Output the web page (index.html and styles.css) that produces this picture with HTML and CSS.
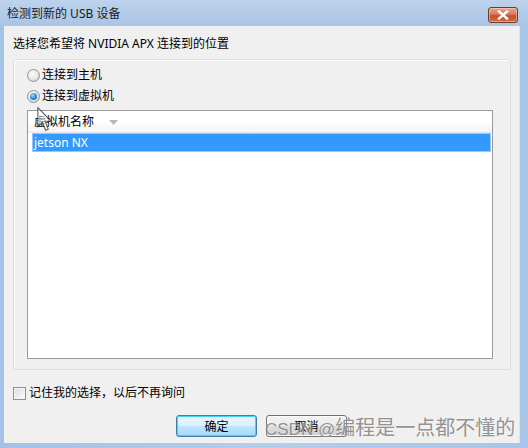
FILE: index.html
```html
<!DOCTYPE html>
<html lang="zh">
<head>
<meta charset="utf-8">
<link rel="stylesheet" href="styles.css">
</head>
<body>
<div class="window">
  <div class="titlebar">
    <span class="title">检测到新的 USB 设备</span>
    <span class="close">
      <svg width="14" height="10" viewBox="0 0 14 10"><path d="M3 1.5 L11 8.5 M11 1.5 L3 8.5" stroke="#fff" stroke-width="2.4" stroke-linecap="square"/></svg>
    </span>
  </div>
  <div class="client">
    <p class="prompt">选择您希望将 NVIDIA APX 连接到的位置</p>
    <div class="group">
      <label class="radio"><span class="dot"></span>连接到主机</label>
      <label class="radio"><span class="dot on"></span>连接到虚拟机</label>
      <div class="list">
        <div class="list-header">
          <span>虚拟机名称</span>
          <svg class="sort" width="9" height="5" viewBox="0 0 9 5"><path d="M0 0 L9 0 L4.5 5 Z" fill="#b5b9c0"/></svg>
        </div>
        <div class="rows">
          <div class="row selected">jetson NX</div>
        </div>
      </div>
    </div>
    <label class="check"><span class="box"></span>记住我的选择，以后不再询问</label>
    <div class="buttons">
      <span class="btn default">确定</span>
      <span class="btn">取消</span>
    </div>
    <div class="watermark"><span class="wm-latin">CSDN @</span>编程是一点都不懂的</div>
  </div>
  <svg class="cursor" width="16" height="25" viewBox="0 0 13 21"><path d="M0.5 0.5 L0.5 16.5 L4.3 12.8 L7 19.5 L9.2 18.6 L6.6 12 L11.8 12 Z" fill="rgba(255,255,255,0.55)" stroke="rgba(40,40,40,0.75)" stroke-width="0.9"/></svg>
</div>
</body>
</html>
```
FILE: styles.css
```css
* { box-sizing: border-box; }
html, body { margin: 0; padding: 0; }
body {
  width: 528px;
  height: 448px;
  overflow: hidden;
  font-family: "Noto Sans", "Noto Sans CJK SC", sans-serif;
  font-size: 12px;
  color: #000;
}
.window {
  position: relative;
  width: 528px;
  height: 448px;
  background: linear-gradient(to right, #a4c2e6 0%, #b4cdea 50%, #a9c5e7 100%);
  padding: 0 8px 5px 4px;
  display: flex;
  flex-direction: column;
}
.titlebar {
  height: 26px;
  display: flex;
  align-items: center;
  justify-content: space-between;
  background: linear-gradient(#bdd3ec, #a9c4e5);
  margin: 0 -8px 0 -4px;
  padding-right: 10px;
  padding-left: 7px;
}
.title {
  font-size: 12px;
  line-height: 16px;
  color: #1b1b1b;
  margin-top: 1px;
}
.close {
  width: 30px;
  height: 16px;
  border: 1px solid #6b3a2b;
  border-radius: 3px;
  background: linear-gradient(#e9a68c 0%, #d8795a 45%, #c2512f 55%, #d36b45 100%);
  display: flex;
  align-items: center;
  justify-content: center;
  box-shadow: inset 0 0 0 1px rgba(255,220,200,0.5);
  margin-top: 3px;
}
.client {
  position: relative;
  flex: 1;
  background: #f0f0f0;
  padding: 10px 0 0 9px;
  border-right: 1px solid #dbe4ee;
}
.prompt {
  margin: 0;
  font-size: 12px;
  line-height: 16px;
}
.group {
  margin-top: 7px;
  width: 498px;
  height: 311px;
  border: 1px solid #d5dfe5;
  border-radius: 3px;
  box-shadow: inset 1px 1px 0 #fff;
  padding: 7px 0 0 13px;
}
.radio, .check {
  display: flex;
  align-items: center;
  height: 16px;
  line-height: 16px;
  font-size: 12px;
}
.radio + .radio { margin-top: 5px; }
.dot {
  width: 13px;
  height: 13px;
  border-radius: 50%;
  border: 1px solid #8e8f8f;
  background: radial-gradient(circle at 40% 35%, #fafafa 0%, #e6e6e6 55%, #c9c9c9 100%);
  margin-right: 2px;
  position: relative;
}
.dot.on::after {
  content: "";
  position: absolute;
  left: 2px;
  top: 2px;
  width: 7px;
  height: 7px;
  border-radius: 50%;
  background: radial-gradient(circle at 40% 35%, #9fdcff 0%, #2c8fd8 50%, #0b4f8f 100%);
}
.list {
  margin-top: 6px;
  width: 466px;
  height: 249px;
  border: 1px solid #9a9a9a;
  background: #fff;
}
.list-header {
  height: 22px;
  display: flex;
  align-items: center;
  padding-left: 6px;
  background: linear-gradient(#ffffff 0%, #ffffff 50%, #f3f4f6 100%);
  border-bottom: 1px solid #e4e8ee;
  font-size: 12px;
  line-height: 16px;
}
.sort { margin-left: 15px; margin-top: 1px; }
.rows { padding: 0 0 0 4px; }
.row {
  height: 19px;
  line-height: 19px;
  padding-left: 1px;
  font-size: 12px;
  width: 459px;
}
.row.selected {
  background: #3399ff;
  color: #fff;
  border: 1px solid #9cc8f6;
  line-height: 17px;
}
.check {
  margin-top: 15px;
}
.box {
  width: 13px;
  height: 13px;
  border: 1px solid #8e8f8f;
  background: linear-gradient(135deg, #dcdcdc, #fbfbfb);
  box-shadow: inset 0 0 0 1px #f4f4f4;
  margin-right: 3px;
}
.buttons {
  display: flex;
  gap: 9px;
  margin-top: 14px;
  padding-left: 163px;
}
.btn {
  width: 81px;
  height: 22px;
  display: flex;
  align-items: center;
  justify-content: center;
  border: 1px solid #707070;
  border-radius: 3px;
  background: linear-gradient(#f2f2f2 0%, #ebebeb 50%, #dddddd 51%, #cfcfcf 100%);
  box-shadow: inset 0 0 0 1px #fcfcfc;
  font-size: 12px;
}
.btn.default {
  border-color: #3c7fb1;
  background: linear-gradient(#eaf6fd 0%, #d9f0fc 50%, #bee6fd 51%, #a7d9f5 100%);
  box-shadow: inset 0 0 0 1px #48d1ff;
}
.watermark {
  position: absolute;
  left: 261px;
  top: 387px;
  font-family: "Noto Sans CJK SC", sans-serif;
  font-size: 20px;
  line-height: 28px;
  color: rgba(120,120,120,0.8);
  white-space: nowrap;
  text-shadow: 0 0 2px rgba(255,255,255,0.6);
}
.wm-latin {
  font-family: "Liberation Sans", sans-serif;
  font-size: 17px;
}
.cursor {
  position: absolute;
  left: 37px;
  top: 107px;
}
```
